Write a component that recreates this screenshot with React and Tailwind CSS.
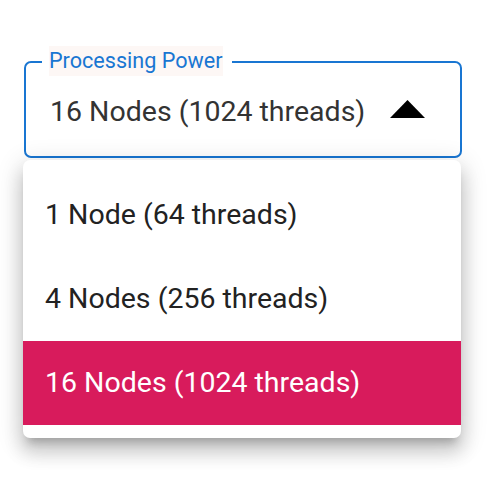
import React from "react";

const items = [
  "1 Node (64 threads)",
  "4 Nodes (256 threads)",
  "16 Nodes (1024 threads)",
];

export default function App() {
  return (
    <div
      className="w-[487px] h-[487px] bg-white pt-[61px] pl-[24px]"
      style={{ fontFamily: "Roboto, 'Liberation Sans', sans-serif" }}
    >
      <div className="relative w-[438px] h-[97px] border-2 border-[#1976d2] rounded-[7px] flex items-center pl-[24px] pr-[35px]">
        <span className="flex-1 mt-[5px] text-[28.5px] leading-none text-[#333]">
          16 Nodes (1024 threads)
        </span>
        <svg width="35" height="18" viewBox="0 0 35 18" className="mb-[2px]">
          <polygon points="0,18 17.5,0 35,18" fill="#000" />
        </svg>
        <div className="absolute left-[16px] top-[-18px] w-[190px] h-[32px] bg-white flex items-center px-[7px]">
          <span className="bg-[#fdf7f5] h-[30px] flex items-center text-[21.6px] leading-none text-[#1976d2] whitespace-nowrap">
            Processing Power
          </span>
        </div>
      </div>
      <div className="relative z-10 mt-[2px] -ml-[1px] w-[438px] bg-white rounded-[7px] py-[13px] shadow-[0_9px_9px_-5px_rgba(0,0,0,0.2),0_14px_18px_2px_rgba(0,0,0,0.14),0_5px_25px_4px_rgba(0,0,0,0.12)]">
        {items.map((t, i) => (
          <div
            key={t}
            className={
              i === 2
                ? "h-[84px] flex items-center pl-[22px] text-[28.5px] leading-none bg-[#d81b5c] text-white"
                : "h-[84px] flex items-center pl-[22px] text-[28.5px] leading-none text-[#222]"
            }
          >
            {t}
          </div>
        ))}
      </div>
    </div>
  );
}
